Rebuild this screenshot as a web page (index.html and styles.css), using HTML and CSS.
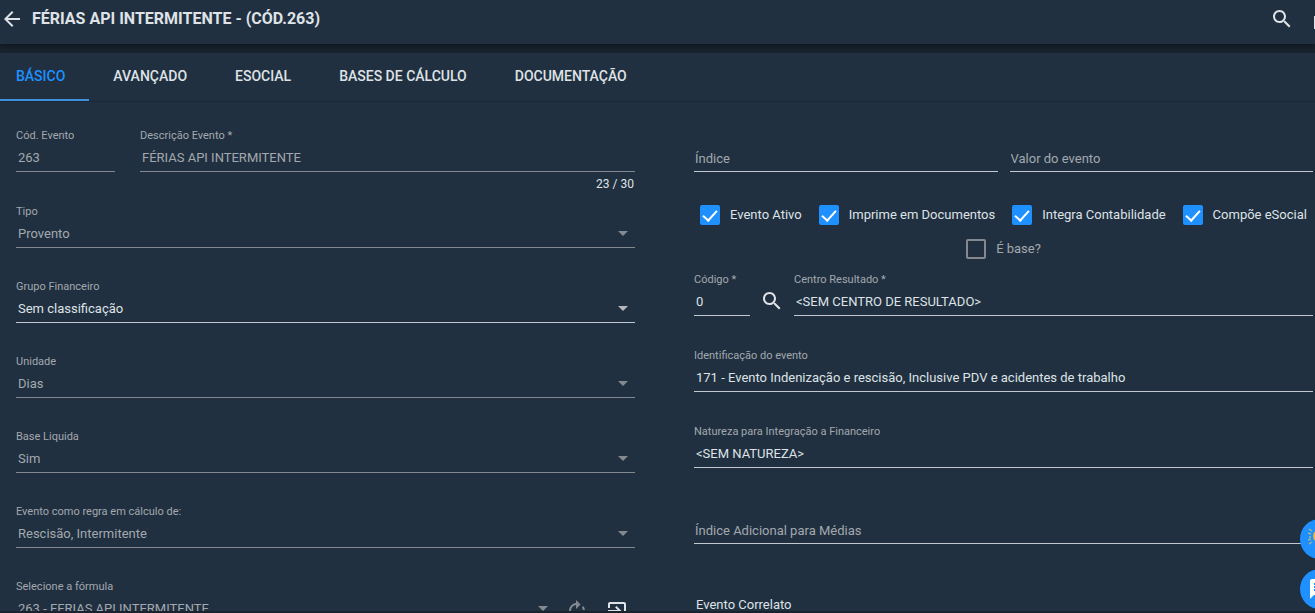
FILE: index.html
```html
<!DOCTYPE html>
<html lang="pt-BR">
<head>
    <meta charset="UTF-8">
    <meta name="viewport" content="width=device-width, initial-scale=1.0">
    <title>Férias API Intermitente</title>
    <link rel="stylesheet" href="styles.css">
</head>
<body>
    <header class="topbar">
        <button type="button" class="icon-btn" aria-label="Voltar">
            <svg viewBox="0 0 24 24"><path d="M20 11H7.83l5.59-5.59L12 4l-8 8 8 8 1.41-1.41L7.83 13H20v-2z"/></svg>
        </button>
        <h1>FÉRIAS API INTERMITENTE - (CÓD.263)</h1>
        <div class="topbar-actions">
            <button type="button" class="icon-btn" aria-label="Pesquisar">
                <svg viewBox="0 0 24 24"><path d="M15.5 14h-.79l-.28-.27C15.41 12.59 16 11.11 16 9.5 16 5.91 13.09 3 9.5 3S3 5.91 3 9.5 5.91 16 9.5 16c1.61 0 3.09-.59 4.23-1.57l.27.28v.79l5 4.99L20.49 19l-4.99-5zm-6 0C7.01 14 5 11.99 5 9.5S7.01 5 9.5 5 14 7.01 14 9.5 11.99 14 9.5 14z"/></svg>
            </button>
            <button type="button" class="icon-btn" aria-label="Salvar">
                <svg viewBox="0 0 24 24"><path d="M3 9h14l4 4v9H3z"/></svg>
            </button>
        </div>
    </header>

    <main class="card">
        <nav class="tabs">
            <a href="#basico" class="active">BÁSICO</a>
            <a href="#avancado">AVANÇADO</a>
            <a href="#esocial">ESOCIAL</a>
            <a href="#bases">BASES DE CÁLCULO</a>
            <a href="#documentacao">DOCUMENTAÇÃO</a>
        </nav>

        <form class="form">
            <div class="col col-left">
                <div class="row row-desc">
                    <div class="field field-cod">
                        <label for="cod">Cód. Evento</label>
                        <input id="cod" type="text" value="263" disabled>
                    </div>
                    <div class="field">
                        <label for="descricao">Descrição Evento *</label>
                        <input id="descricao" type="text" value="FÉRIAS API INTERMITENTE" disabled>
                        <span class="hint">23 / 30</span>
                    </div>
                </div>
                <div class="field select disabled">
                    <label for="tipo">Tipo</label>
                    <select id="tipo" disabled><option>Provento</option></select>
                </div>
                <div class="field select">
                    <label for="grupo">Grupo Financeiro</label>
                    <select id="grupo"><option>Sem classificação</option></select>
                </div>
                <div class="field select disabled">
                    <label for="unidade">Unidade</label>
                    <select id="unidade" disabled><option>Dias</option></select>
                </div>
                <div class="field select disabled">
                    <label for="base-liquida">Base Liquida</label>
                    <select id="base-liquida" disabled><option>Sim</option></select>
                </div>
                <div class="field select disabled">
                    <label for="regra">Evento como regra em cálculo de:</label>
                    <select id="regra" disabled><option>Rescisão, Intermitente</option></select>
                </div>
                <div class="row row-formula">
                    <div class="field select disabled">
                        <label for="formula">Selecione a fórmula</label>
                        <select id="formula" disabled><option>263 - FERIAS API INTERMITENTE</option></select>
                    </div>
                    <button type="button" class="icon-btn" aria-label="Atualizar fórmula" disabled>
                        <svg viewBox="0 0 24 24"><path d="M15.55 5.55L11 1v3.07C7.06 4.56 4 7.92 4 12s3.05 7.44 7 7.93v-2.02c-2.84-.48-5-2.94-5-5.91s2.16-5.43 5-5.91V10l4.55-4.45zM19.93 11c-.17-1.39-.72-2.73-1.62-3.89l-1.42 1.42c.54.75.88 1.6 1.02 2.47h2.02zM13 17.9v2.02c1.39-.17 2.74-.71 3.9-1.61l-1.44-1.44c-.75.54-1.59.89-2.46 1.03zm3.89-2.42l1.42 1.41c.9-1.16 1.45-2.5 1.62-3.89h-2.02c-.14.87-.48 1.72-1.02 2.48z"/></svg>
                    </button>
                    <button type="button" class="icon-btn" aria-label="Abrir fórmula">
                        <svg viewBox="0 0 24 24"><path d="M10.09 15.59L11.5 17l5-5-5-5-1.41 1.41L12.67 11H3v2h9.67l-2.58 2.59zM19 3H5c-1.11 0-2 .9-2 2v4h2V5h14v14H5v-4H3v4c0 1.1.89 2 2 2h14c1.1 0 2-.9 2-2V5c0-1.1-.9-2-2-2z"/></svg>
                    </button>
                </div>
            </div>

            <div class="col col-right">
                <div class="row row-valores">
                    <div class="field empty">
                        <input type="text" placeholder="Índice" aria-label="Índice">
                    </div>
                    <div class="field empty">
                        <input type="text" placeholder="Valor do evento" aria-label="Valor do evento">
                    </div>
                </div>
                <div class="checks">
                    <label class="check"><input type="checkbox" checked>Evento Ativo</label>
                    <label class="check"><input type="checkbox" checked>Imprime em Documentos</label>
                    <label class="check"><input type="checkbox" checked>Integra Contabilidade</label>
                    <label class="check"><input type="checkbox" checked>Compõe eSocial</label>
                    <label class="check off"><input type="checkbox" disabled>É base?</label>
                </div>
                <div class="row row-centro">
                    <div class="field field-codigo">
                        <label for="codigo">Código *</label>
                        <input id="codigo" type="text" value="0">
                    </div>
                    <button type="button" class="icon-btn" aria-label="Buscar centro">
                        <svg viewBox="0 0 24 24"><path d="M15.5 14h-.79l-.28-.27C15.41 12.59 16 11.11 16 9.5 16 5.91 13.09 3 9.5 3S3 5.91 3 9.5 5.91 16 9.5 16c1.61 0 3.09-.59 4.23-1.57l.27.28v.79l5 4.99L20.49 19l-4.99-5zm-6 0C7.01 14 5 11.99 5 9.5S7.01 5 9.5 5 14 7.01 14 9.5 11.99 14 9.5 14z"/></svg>
                    </button>
                    <div class="field">
                        <label for="centro">Centro Resultado *</label>
                        <input id="centro" type="text" value="&lt;SEM CENTRO DE RESULTADO&gt;">
                    </div>
                </div>
                <div class="field">
                    <label for="identificacao">Identificação do evento</label>
                    <input id="identificacao" type="text" value="171 - Evento Indenização e rescisão, Inclusive PDV e acidentes de trabalho">
                </div>
                <div class="field">
                    <label for="natureza">Natureza para Integração a Financeiro</label>
                    <input id="natureza" type="text" value="&lt;SEM NATUREZA&gt;">
                </div>
                <div class="field empty">
                    <input type="text" placeholder="Índice Adicional para Médias" aria-label="Índice Adicional para Médias">
                </div>
                <p class="section-title">Evento Correlato</p>
            </div>
        </form>
    </main>

    <div class="fabs">
        <button type="button" class="fab" aria-label="Novidades">
            <svg viewBox="0 0 24 24">
                <circle cx="12" cy="9" r="7" fill="#f2b632"/>
                <path d="M1 2l3 2M0 6l3 1M1 10h2M0 13l3-1M1 17l3-2" stroke="#a9b583" stroke-width="1.5" fill="none"/>
            </svg>
        </button>
        <button type="button" class="fab" aria-label="Chat">
            <svg viewBox="0 0 24 24"><path d="M20 2H4c-1.1 0-1.99.9-1.99 2L2 22l4-4h14c1.1 0 2-.9 2-2V4c0-1.1-.9-2-2-2zM6 9h12v2H6V9zm8 5H6v-2h8v2zm4-6H6V6h12v2z"/></svg>
        </button>
    </div>
</body>
</html>
```
FILE: styles.css
```css
* {
    box-sizing: border-box;
}
body {
    margin: 0;
    height: 100vh;
    display: flex;
    flex-direction: column;
    overflow: hidden;
    background-color: #18232e;
    color: #dfe2e6;
    font-family: Roboto, sans-serif;
    font-size: 13px;
}
button {
    padding: 0;
    border: none;
    background: none;
    color: inherit;
    cursor: pointer;
}
svg {
    display: block;
    width: 24px;
    height: 24px;
    fill: currentColor;
}
.icon-btn {
    flex: none;
}
.icon-btn:disabled {
    color: #84898f;
}

/* barra superior */
.topbar {
    flex: none;
    display: flex;
    align-items: center;
    gap: 8px;
    height: 44px;
    padding-bottom: 7px;
    background-color: #213041;
    box-shadow: 0 2px 5px rgba(0, 0, 0, 0.4);
    overflow: hidden;
}
.topbar h1 {
    margin: 0;
    font-size: 16px;
    font-weight: 700;
}
.topbar-actions {
    display: flex;
    gap: 17px;
    margin-left: auto;
    margin-right: -20px;
}

.card {
    flex: 1;
    min-height: 0;
    margin: 9px 0 2px;
    background-color: #203040;
    overflow: hidden;
}

/* abas */
.tabs {
    display: flex;
    border-bottom: 1px solid #1b2937;
}
.tabs a {
    padding: 0 24px;
    border-bottom: 2px solid transparent;
    color: #dfe2e6;
    font-size: 14px;
    font-weight: 500;
    line-height: 46px;
    text-decoration: none;
}
.tabs a:first-child {
    padding-left: 16px;
}
.tabs a.active {
    color: #1e90ff;
    border-color: #3f8fdc;
}

/* formulario */
.form {
    display: grid;
    grid-template-columns: minmax(0, 1fr) minmax(0, 1fr);
    gap: 59px;
    padding: 25px 2px 0 16px;
}
.col {
    display: flex;
    flex-direction: column;
}
.col-left {
    gap: 30px;
}
.col-right {
    gap: 31px;
}
.row {
    display: flex;
}
.row .field {
    flex: 1;
}
.field {
    position: relative;
    min-width: 0;
}
.field label {
    display: block;
    margin-bottom: -2px;
    color: #a3a8ae;
    font-size: 11px;
    line-height: 18px;
}
.field input,
.field select {
    display: block;
    width: 100%;
    height: 29px;
    padding: 0 2px;
    border: none;
    border-bottom: 1px solid #c3c8ce;
    border-radius: 0;
    outline: none;
    appearance: none;
    background: transparent;
    color: #dfe2e6;
    font: inherit;
    opacity: 1;
}
.field input:disabled,
.field select:disabled {
    color: #a3a8ae;
    border-color: #84898f;
}
.field.empty {
    padding-top: 16px;
}
.field.empty input {
    padding: 2px 1px 0;
}
.field input::placeholder {
    color: #a3a8ae;
    opacity: 1;
}
.select::after {
    content: '';
    position: absolute;
    right: 7px;
    bottom: 12px;
    border: 5px solid transparent;
    border-top-color: #b4b8bc;
    border-bottom: none;
    pointer-events: none;
}
.select.disabled::after {
    border-top-color: #84898f;
}
.hint {
    display: block;
    padding-right: 1px;
    font-size: 12px;
    line-height: 24px;
    text-align: right;
}
.row-desc {
    gap: 25px;
    margin-bottom: -23px;
}
.row .field-cod {
    flex: none;
    width: 99px;
}
.row-formula {
    align-items: flex-end;
    gap: 4px;
}
.row-formula .icon-btn {
    width: 36px;
}
.row-formula svg {
    margin: 0 auto;
}
.row-valores {
    gap: 12px;
}
.row .field-codigo {
    flex: none;
    width: 56px;
}
.row-centro .icon-btn {
    width: 44px;
    padding: 14px 10px 0;
}

/* checkboxes */
.checks {
    display: flex;
    flex-wrap: wrap;
    justify-content: center;
    column-gap: 17px;
    margin: -5px 0 -26px;
}
.check {
    display: flex;
    align-items: center;
    gap: 10px;
    height: 34px;
    line-height: 16px;
    white-space: nowrap;
}
.check input {
    display: grid;
    place-items: center;
    width: 20px;
    height: 20px;
    margin: 0;
    border: 2px solid #84898f;
    border-radius: 2px;
    appearance: none;
}
.check input:checked {
    border-color: #1e90ff;
    background-color: #1e90ff;
}
.check input:checked::after {
    content: '';
    width: 6px;
    height: 12px;
    margin-bottom: 4px;
    border: solid #fff;
    border-width: 0 2px 2px 0;
    transform: rotate(42deg);
}
.check.off {
    color: #a3a8ae;
}
.section-title {
    margin: 16px 0 0 2px;
    line-height: 28px;
}

/* botoes flutuantes */
.fabs {
    position: fixed;
    right: -25px;
    bottom: 4px;
    display: flex;
    flex-direction: column;
    gap: 10px;
}
.fab {
    display: grid;
    place-items: center;
    width: 40px;
    height: 40px;
    border-radius: 50%;
    background-color: #1e90ff;
    color: #fff;
}
```
